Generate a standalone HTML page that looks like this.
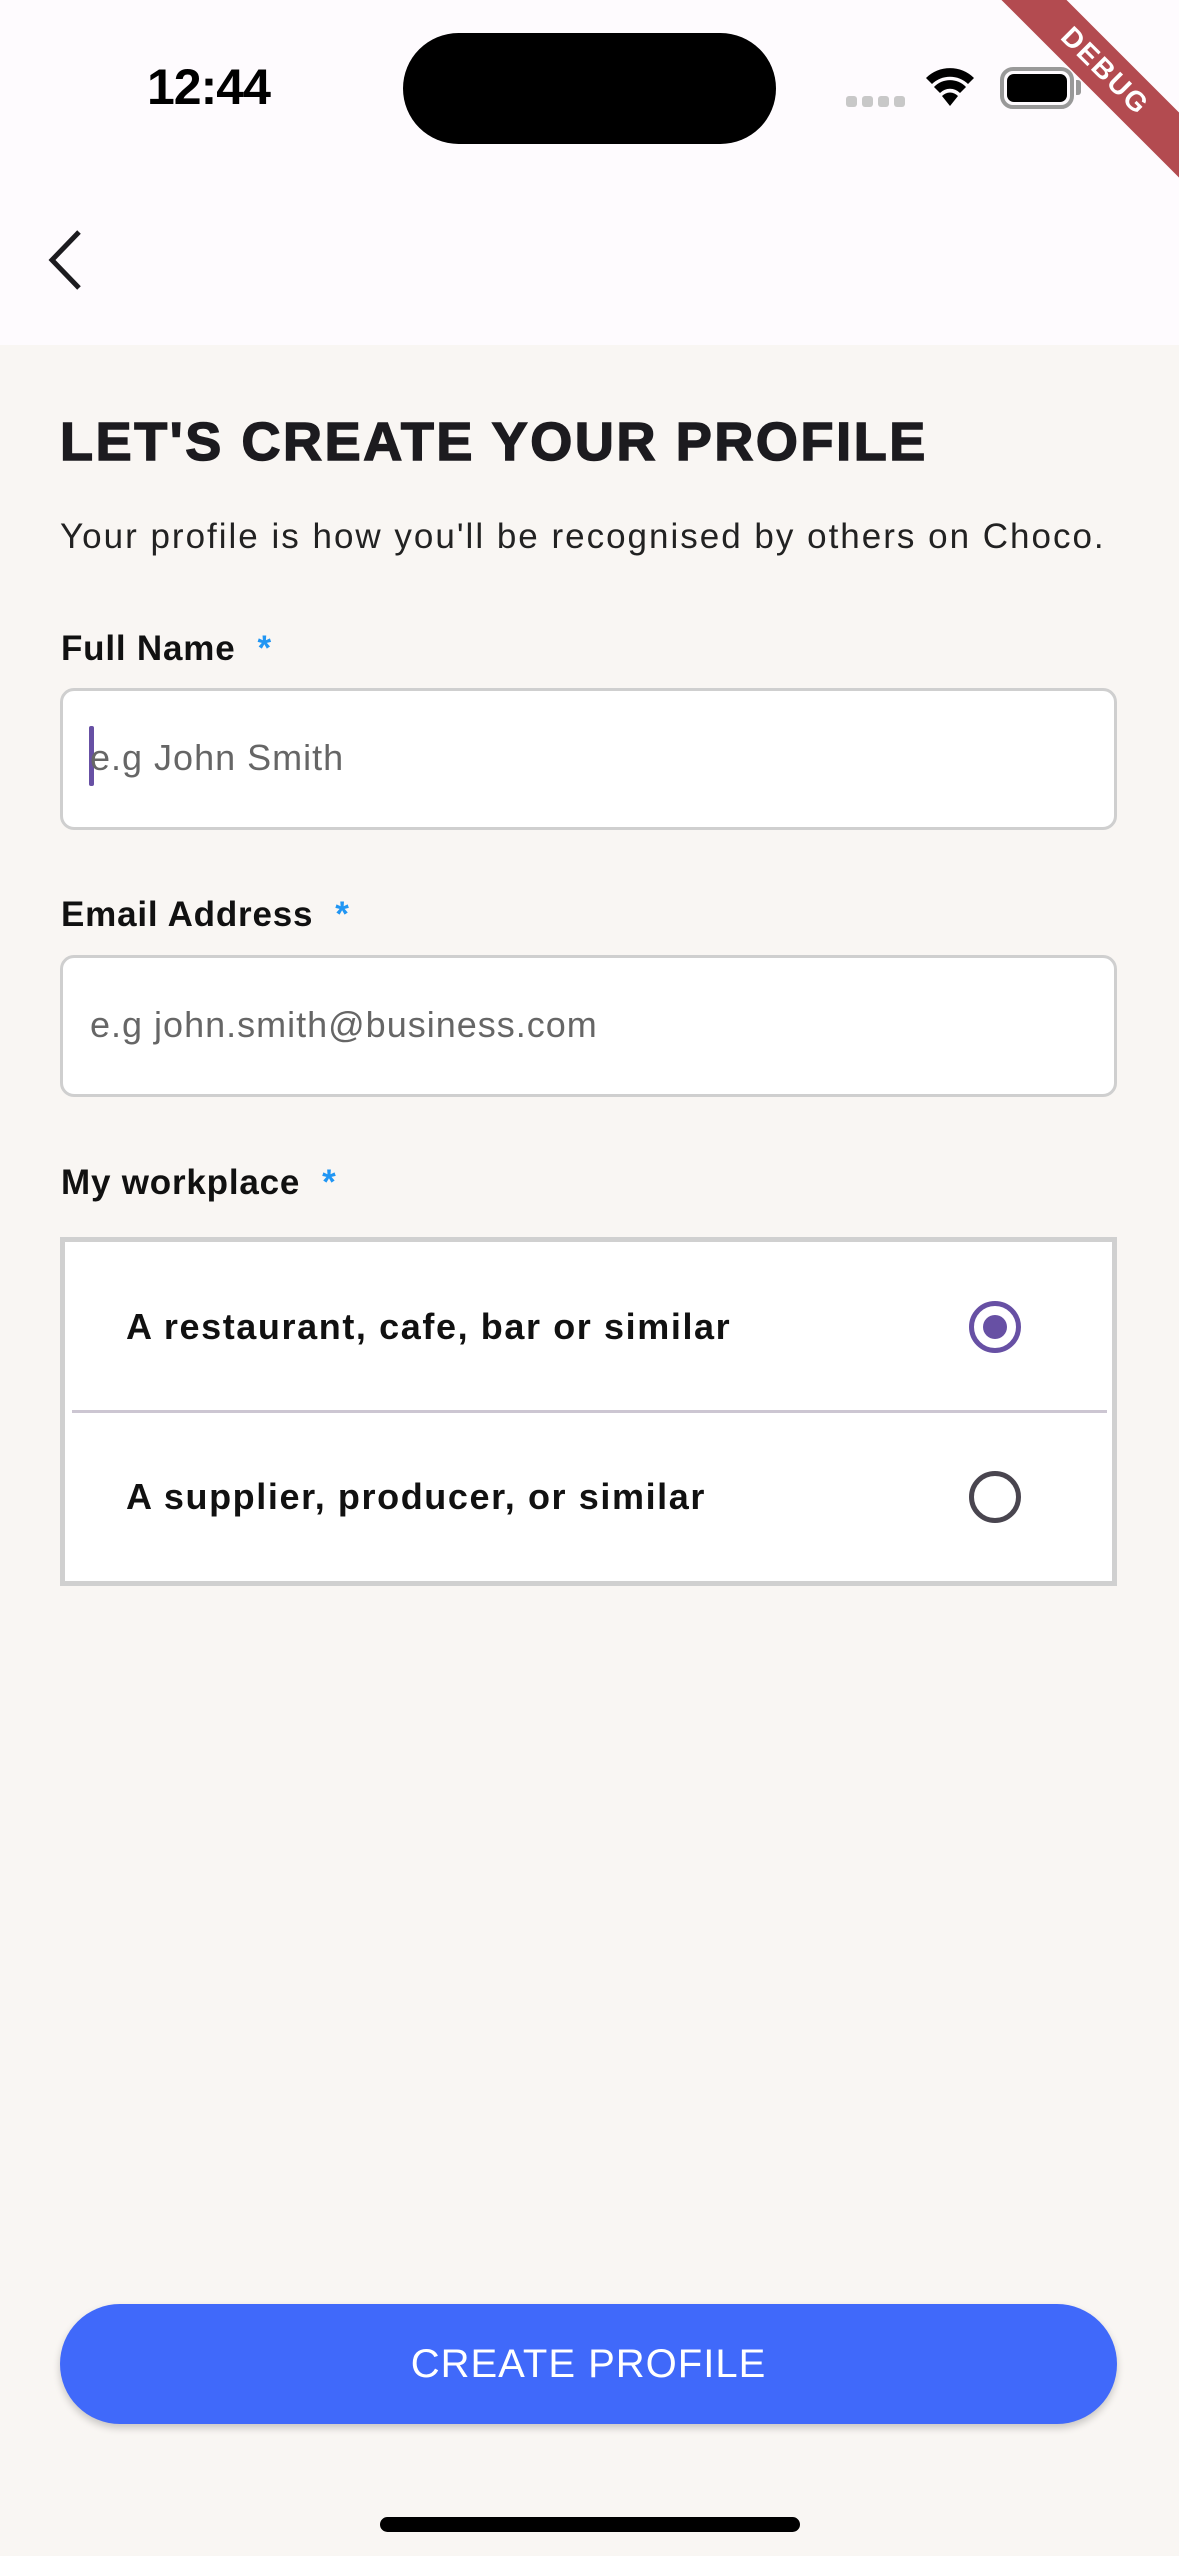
<!DOCTYPE html>
<html><head><meta charset="utf-8"><style>
*{margin:0;padding:0;box-sizing:border-box}
body{width:1179px;height:2556px;background:#f9f6f3;position:relative;overflow:hidden;font-family:"Liberation Sans",sans-serif}
.abs{position:absolute}
.hdr{left:0;top:0;width:1179px;height:345px;background:#fefbfe}
.lbl{font-weight:bold;font-size:35px;color:#111;left:61px;letter-spacing:0.8px}
.lbl span{color:#2196f3;margin-left:22px}
.inp{left:60px;width:1057px;height:142px;background:#fff;border:3px solid #cfcfcf;border-radius:14px}
.ph{font-size:36px;color:#666;left:90px;letter-spacing:1px}
.opt{font-weight:bold;font-size:36px;color:#111;left:126px;letter-spacing:1.6px}
</style></head><body>
<div class="abs hdr"></div>
<div class="abs" style="left:147px;top:58px;font-size:50px;font-weight:bold;color:#000;letter-spacing:-1px">12:44</div>
<div class="abs" style="left:403px;top:33px;width:373px;height:111px;background:#000;border-radius:56px"></div>
<div class="abs" style="left:846px;top:96px;width:59px;height:11px">
<div class="abs" style="left:0;width:11px;height:11px;background:#c8c8c8;border-radius:3px"></div>
<div class="abs" style="left:16px;width:11px;height:11px;background:#c8c8c8;border-radius:3px"></div>
<div class="abs" style="left:32px;width:11px;height:11px;background:#c8c8c8;border-radius:3px"></div>
<div class="abs" style="left:48px;width:11px;height:11px;background:#c8c8c8;border-radius:3px"></div></div>
<svg class="abs" style="left:924px;top:66px" width="52" height="42" viewBox="0 0 52 42"><path d="M2 12 A34 34 0 0 1 50 12 L44 18 A26 26 0 0 0 8 18Z M10 21 A22 22 0 0 1 42 21 L36 27 A14 14 0 0 0 16 27Z M18 30 A11 11 0 0 1 34 30 L26 40Z" fill="#000"/></svg>
<div class="abs" style="left:1000px;top:67px;width:74px;height:42px;border:4px solid #999;border-radius:13px;padding:3px"><div style="width:100%;height:100%;background:#000;border-radius:7px"></div></div>
<div class="abs" style="left:1076px;top:80px;width:5px;height:15px;background:#999;border-radius:0 3px 3px 0"></div>
<div class="abs" style="left:965px;top:48px;width:280px;height:46px;background:#b34b50;transform:rotate(45deg);color:#fff;font-weight:bold;font-size:28px;text-align:center;line-height:46px;letter-spacing:2px">DEBUG</div>
<svg class="abs" style="left:44px;top:228px" width="44" height="64" viewBox="0 0 44 64"><path d="M35 4 L8 32 L35 60" fill="none" stroke="#1c1b1f" stroke-width="5"/></svg>
<div class="abs" style="left:60px;top:411px;font-size:54px;font-weight:900;color:#1c1b1f;letter-spacing:2.6px;white-space:nowrap;-webkit-text-stroke:1.5px #1c1b1f">LET'S CREATE YOUR PROFILE</div>
<div class="abs" style="left:60px;top:517px;font-size:35px;color:#222;white-space:nowrap;letter-spacing:2px">Your profile is how you'll be recognised by others on Choco.</div>
<div class="abs lbl" style="top:629px">Full Name<span>*</span></div>
<div class="abs inp" style="top:688px"></div>
<div class="abs" style="left:89px;top:726px;width:5px;height:60px;background:#6750a4;border-radius:2px"></div>
<div class="abs ph" style="top:737px">e.g John Smith</div>
<div class="abs lbl" style="top:895px">Email Address<span>*</span></div>
<div class="abs inp" style="top:955px"></div>
<div class="abs ph" style="top:1004px">e.g john.smith@business.com</div>
<div class="abs lbl" style="top:1163px">My workplace<span>*</span></div>
<div class="abs" style="left:60px;top:1237px;width:1057px;height:349px;background:#fff;border:5px solid #d0d0d0"></div>
<div class="abs" style="left:72px;top:1410px;width:1035px;height:3px;background:#ccc6d2"></div>
<div class="abs opt" style="top:1306px">A restaurant, cafe, bar or similar</div>
<div class="abs opt" style="top:1476px">A supplier, producer, or similar</div>
<div class="abs" style="left:969px;top:1301px;width:52px;height:52px;border:5px solid #6750a4;border-radius:50%"></div>
<div class="abs" style="left:983px;top:1315px;width:24px;height:24px;background:#6750a4;border-radius:50%"></div>
<div class="abs" style="left:969px;top:1471px;width:52px;height:52px;border:5px solid #49454f;border-radius:50%"></div>
<div class="abs" style="left:60px;top:2304px;width:1057px;height:120px;background:#4069fa;border-radius:60px;box-shadow:0 4px 8px rgba(0,0,0,0.2);color:#fff;font-size:40px;text-align:center;line-height:120px;letter-spacing:1px">CREATE PROFILE</div>
<div class="abs" style="left:380px;top:2517px;width:420px;height:15px;background:#000;border-radius:8px"></div>
</body></html>
